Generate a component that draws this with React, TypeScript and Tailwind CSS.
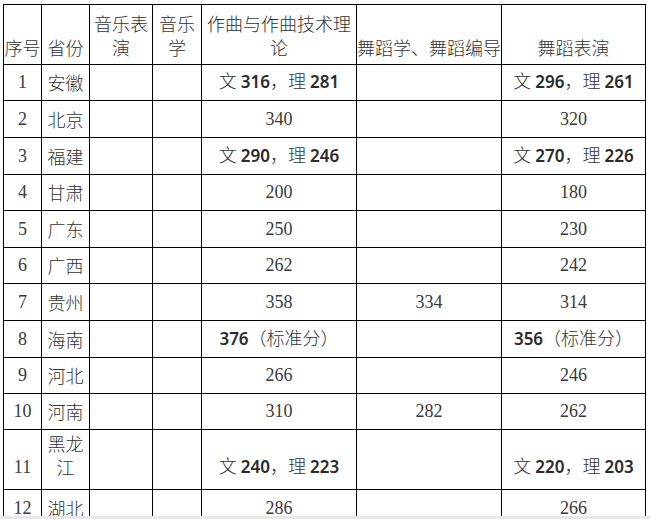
import React from 'react'

type Row = { no: string; prov: string[]; comp: string; dance: string; perf: string }

const rows: Row[] = [
  { no: '1', prov: ['安徽'], comp: '文 316，理 281', dance: '', perf: '文 296，理 261' },
  { no: '2', prov: ['北京'], comp: '340', dance: '', perf: '320' },
  { no: '3', prov: ['福建'], comp: '文 290，理 246', dance: '', perf: '文 270，理 226' },
  { no: '4', prov: ['甘肃'], comp: '200', dance: '', perf: '180' },
  { no: '5', prov: ['广东'], comp: '250', dance: '', perf: '230' },
  { no: '6', prov: ['广西'], comp: '262', dance: '', perf: '242' },
  { no: '7', prov: ['贵州'], comp: '358', dance: '334', perf: '314' },
  { no: '8', prov: ['海南'], comp: '376（标准分）', dance: '', perf: '356（标准分）' },
  { no: '9', prov: ['河北'], comp: '266', dance: '', perf: '246' },
  { no: '10', prov: ['河南'], comp: '310', dance: '282', perf: '262' },
  { no: '11', prov: ['黑龙', '江'], comp: '文 240，理 223', dance: '', perf: '文 220，理 203' },
  { no: '12', prov: ['湖北'], comp: '286', dance: '', perf: '266' },
]

// 粗体数字 + 宋体风格的中文
function Score({ value }: { value: string }) {
  if (!value) return null
  const bold = "font-['Noto_Sans',sans-serif] font-semibold text-[17px] text-[#2b2b2b]"
  const wl = value.match(/^文 (\d+)，理 (\d+)$/)
  if (wl) {
    return (
      <span className="whitespace-nowrap">
        文 <span className={bold}>{wl[1]}</span>，理 <span className={bold}>{wl[2]}</span>
      </span>
    )
  }
  const std = value.match(/^(\d+)（标准分）$/)
  if (std) {
    return (
      <span className="whitespace-nowrap">
        <span className={bold}>{std[1]}</span>（标准分）
      </span>
    )
  }
  return <span className="font-['Liberation_Serif',serif] text-[18px] text-[#3a3a3a]">{value}</span>
}

function Cell({ children, pb = 'pb-[5px]' }: { children?: React.ReactNode; pb?: string }) {
  return (
    <div className={`border-r border-b border-black flex items-end justify-center text-center leading-[24px] whitespace-nowrap ${pb}`}>
      {children}
    </div>
  )
}

export default function App() {
  const head = 'pb-[5px]'
  return (
    <div className="h-[519px] w-[650px] bg-white overflow-hidden flex flex-col font-['Noto_Sans_CJK_SC',sans-serif] text-[18px] text-[#333] font-light">
      <div className="flex-1 overflow-hidden pt-[4px] pl-[3px]">
        <div className="grid w-max grid-cols-[38px_48px_63px_49px_155px_145px_144px] grid-rows-[60px_36px_37px_37px_36px_37px_36px_37px_37px_36px_36px_60px_37px] border-l border-t border-black">
          <Cell pb={head}>序号</Cell>
          <Cell pb={head}>省份</Cell>
          <Cell pb={head}>
            音乐表<br />演
          </Cell>
          <Cell pb={head}>
            音乐<br />学
          </Cell>
          <Cell pb={head}>
            作曲与作曲技术理<br />论
          </Cell>
          <Cell pb={head}>舞蹈学、舞蹈编导</Cell>
          <Cell pb={head}>舞蹈表演</Cell>

          {rows.map((r) => {
            const pb = r.prov.length > 1 ? 'pb-[10px]' : 'pb-[6px]'
            return (
              <React.Fragment key={r.no}>
                <Cell pb={pb}>
                  <span className="font-['Liberation_Serif',serif] text-[#3a3a3a]">{r.no}</span>
                </Cell>
                <Cell pb={pb}>
                  {r.prov.map((p, i) => (
                    <React.Fragment key={p}>
                      {i > 0 && <br />}
                      {p}
                    </React.Fragment>
                  ))}
                </Cell>
                <Cell pb={pb} />
                <Cell pb={pb} />
                <Cell pb={pb}>
                  <Score value={r.comp} />
                </Cell>
                <Cell pb={pb}>
                  <Score value={r.dance} />
                </Cell>
                <Cell pb={pb}>
                  <Score value={r.perf} />
                </Cell>
              </React.Fragment>
            )
          })}
        </div>
      </div>
      <div className="h-[3px] bg-[#e8e8e8]" />
    </div>
  )
}
